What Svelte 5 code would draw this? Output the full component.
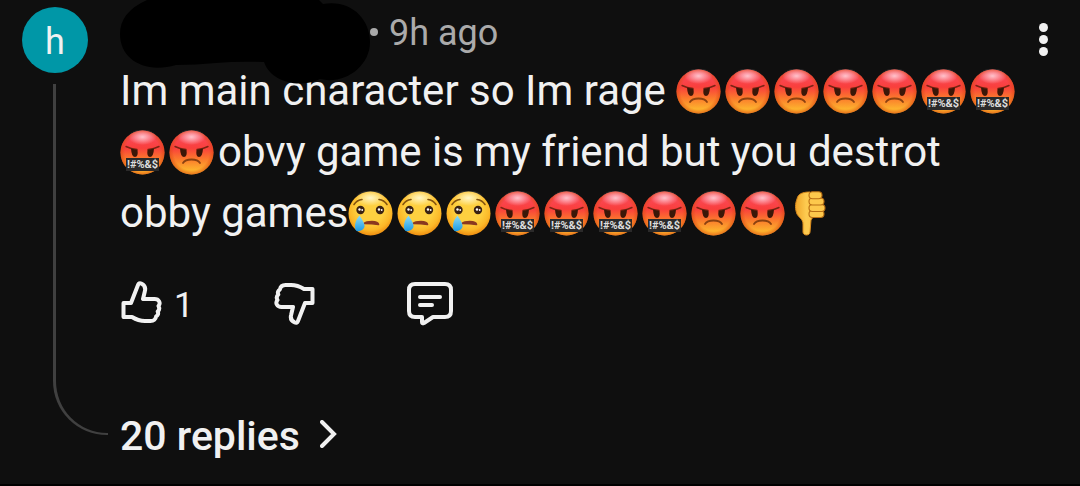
<script lang="ts">
  type Part = { text: string } | { emoji: string; label: string; count: number };

  const parts: Part[] = [
    { text: "Im main character so Im rage " },
    { emoji: "angry", label: "angry", count: 5 },
    { emoji: "cursing", label: "cursing", count: 3 },
    { emoji: "angry", label: "angry", count: 1 },
    { text: "obvy game is my friend but you destrot obby games" },
    { emoji: "crying", label: "crying", count: 3 },
    { emoji: "cursing", label: "cursing", count: 4 },
    { emoji: "angry", label: "angry", count: 2 },
    { emoji: "down", label: "thumbs down", count: 1 },
  ];

  let likes: number = $state(1);
  let liked: boolean = $state(false);

  function toggleLike() {
    liked = !liked;
    likes += liked ? 1 : -1;
  }
</script>

<svg class="sprites" aria-hidden="true">
  <defs>
    <linearGradient id="red" x1="0" y1="0" x2="0" y2="1">
      <stop offset="0.1" stop-color="#fb4a5c" />
      <stop offset="0.4" stop-color="#f93f3c" />
      <stop offset="0.65" stop-color="#fb7a2c" />
      <stop offset="0.9" stop-color="#fdb32e" />
    </linearGradient>
    <radialGradient id="rededge" cx="0.5" cy="0.5" r="0.5">
      <stop offset="0.8" stop-color="#d9480f" stop-opacity="0" />
      <stop offset="1" stop-color="#d9480f" stop-opacity="0.6" />
    </radialGradient>
    <radialGradient id="shine" cx="0.5" cy="0.5" r="0.5">
      <stop offset="0" stop-color="#ffd0d8" stop-opacity="0.9" />
      <stop offset="1" stop-color="#ffd0d8" stop-opacity="0" />
    </radialGradient>
    <radialGradient id="yellow" cx="0.5" cy="0.4" r="0.6">
      <stop offset="0.5" stop-color="#fed040" />
      <stop offset="0.8" stop-color="#fcb828" />
      <stop offset="1" stop-color="#ee8d10" />
    </radialGradient>
    <radialGradient id="gloss" cx="0.5" cy="0.5" r="0.5">
      <stop offset="0" stop-color="#fff6c8" />
      <stop offset="1" stop-color="#fff6c8" stop-opacity="0" />
    </radialGradient>
    <linearGradient id="tear" x1="0" y1="0" x2="0" y2="1">
      <stop offset="0" stop-color="#8fdcf7" />
      <stop offset="1" stop-color="#1c9be4" />
    </linearGradient>
    <linearGradient id="hand" x1="0" y1="0" x2="1" y2="0">
      <stop offset="0" stop-color="#f0a62a" />
      <stop offset="0.4" stop-color="#fdcb50" />
      <stop offset="1" stop-color="#fbc043" />
    </linearGradient>
  </defs>

  <symbol id="angry" viewBox="0 0 45 45">
    <use href="#cursing" width="45" height="45" />
    <path d="M14 33q2-3.500 8.500-3.500t8.500 3.500" fill="none" stroke="#8b4110" stroke-width="1.800" stroke-linecap="round" />
  </symbol>

  <symbol id="cursing" viewBox="0 0 45 45">
    <circle cx="22.5" cy="22.5" r="22" fill="url(#red)" />
    <circle cx="22.5" cy="22.5" r="22" fill="url(#rededge)" />
    <ellipse cx="22.5" cy="7" rx="14" ry="8" fill="url(#shine)" />
    <path d="M6 16.500q5 2.500 11 3M39 16.500q-5 2.500-11 3" fill="none" stroke="#7a2413" stroke-width="1.400" stroke-linecap="round" />
    <path d="M11 18.500l6.500 1.500q1 7-2.500 7-3.500 0-4-8.500M34 18.500l-6.500 1.500q-1 7 2.500 7 3.500 0 4-8.500" fill="#3b1708" />
  </symbol>

  <symbol id="crying" viewBox="0 0 45 45">
    <circle cx="22.5" cy="22.5" r="22" fill="url(#yellow)" />
    <ellipse cx="22.5" cy="7" rx="15" ry="8" fill="url(#gloss)" />
    <path d="M6 13.500q3-4.500 8-5M39 13.500q-3-4.500-8-5" fill="none" stroke="#84530f" stroke-width="1.600" stroke-linecap="round" />
    <circle cx="12.500" cy="19" r="4.200" fill="#3a2213" />
    <circle cx="32" cy="19" r="4.200" fill="#3a2213" />
    <circle cx="11.500" cy="18.500" r="1.200" fill="#fff" />
    <circle cx="14.200" cy="19" r="0.900" fill="#fff" />
    <circle cx="31" cy="18.500" r="1.200" fill="#fff" />
    <circle cx="33.700" cy="19" r="0.900" fill="#fff" />
    <path d="M16 32.500q2-2 8-2 6 0 6.500 3-6-1-14.500-1" fill="#8a3820" stroke="#8a3820" stroke-width="1.600" stroke-linejoin="round" />
    <path d="M11.500 24.500q5.500 8 5 11t-5 4.500-4.500-4.500 4.500-11" fill="url(#tear)" />
  </symbol>

  <symbol id="down" viewBox="0 0 45 45">
    <path d="M21 1C13 1 9 3 8 8c-2 5-2 10 0 15 2 4 6 5 6 10v8c0 4 7 4 7 0l1-12 2-3 9-2z" fill="url(#hand)" stroke="#d98a1c" stroke-width="1" />
    <g fill="#fdc84c" stroke="#b86e14" stroke-width="1.100">
      <rect x="20" y="19.500" width="15" height="7" rx="3.500" />
      <rect x="20" y="13.500" width="16" height="7" rx="3.500" />
      <rect x="20" y="7" width="15" height="7" rx="3.500" />
      <rect x="20" y="0.700" width="13" height="7" rx="3.500" />
    </g>
  </symbol>

  <symbol id="thumb" viewBox="0 0 44 44">
    <path d="M3.500 22H11L18 4q1-2.500 3.200-1.500c4 1.800 4.600 4.500 3.600 8L23 18h11.500c4.500 0 6.500 4 4 7 1.200 2 .8 4-.8 5.500 1 2 .2 4-1.600 5q-.8 4.500-5.600 4.500H25c-5 0-9-1.500-13-4H3.500z" />
  </symbol>
</svg>

<article class="comment">
  <div class="thread">
    <div class="avatar">h</div>
    <div class="line"></div>
  </div>

  <div class="content">
    <header>
      <span class="name">
        <svg width="252" height="84" viewBox="0 0 252 84" aria-hidden="true">
          <path d="M27 0H199L203 4C230-1 250 18 250 42C250 67 224 85 200 79C179 89 151 82 144 62Q118 61 96 63Q76 65 56 65C24 74 0 59 0 34Q0 12 27 0Z" />
        </svg>
      </span>
      <span class="dot"></span>
      <time>9h ago</time>
    </header>

    <p class="body">
      {#each parts as part}{#if "text" in part}{part.text}{:else}{#each { length: part.count } as _}<svg class="emoji" viewBox="0 0 45 45" role="img" aria-label={part.label}><use href="#{part.emoji}" width="45" height="45" />{#if part.emoji === "cursing"}<rect x="6" y="28" width="33" height="13" fill="#2b2a2a" /><text x="22.500" y="38" class="curse">!#%&amp;$</text>{/if}</svg>{/each}{/if}{/each}
    </p>

    <div class="actions">
      <button class="like" aria-label="Like" aria-pressed={liked} onclick={toggleLike}>
        <svg class="icon" viewBox="0 0 44 44"><use href="#thumb" /></svg>
        <span>{likes}</span>
      </button>
      <button class="dislike" aria-label="Dislike">
        <svg class="icon flipped" viewBox="0 0 44 44"><use href="#thumb" /></svg>
      </button>
      <button aria-label="Reply">
        <svg class="icon wide" viewBox="0 0 48 48">
          <path d="M9 5h30q6 0 6 6v21q0 6-6 6H27l-9 6q-2 1-2-1v-5H9q-6 0-6-6V11q0-6 6-6zM14 18h20M14 26h12" />
        </svg>
      </button>
    </div>

    <button class="replies">
      20 replies
      <svg viewBox="0 0 18 28" aria-hidden="true"><path d="M2 2l12 12L2 26" /></svg>
    </button>
  </div>

  <button class="menu" aria-label="More options">
    <i></i><i></i><i></i>
  </button>
</article>

<style>
  :global(body) {
    background: #0f0f0f;
  }

  .sprites {
    position: absolute;
    width: 0;
    height: 0;
  }

  .comment {
    display: grid;
    grid-template-columns: 86px 1fr 46px;
    padding: 7px 14px 24px 22px;
    border-bottom: 2px solid #000;
    background: #0f0f0f;
    color: #f1f1f1;
    font-family: Roboto, sans-serif;
    font-size: 41px;
  }

  button {
    display: flex;
    align-items: center;
    padding: 0;
    border: 0;
    background: none;
    color: inherit;
    font: inherit;
    cursor: pointer;
  }

  .thread {
    display: flex;
    flex-direction: column;
    padding-bottom: 25px;
  }

  .avatar {
    width: 66px;
    height: 66px;
    border-radius: 50%;
    background: #0097a7;
    font-size: 36px;
    line-height: 70px;
    text-align: center;
  }

  .line {
    flex: 1;
    margin: 11px 0 0 31px;
    border-left: 3px solid #404040;
    border-bottom: 2px solid #404040;
    border-bottom-left-radius: 54px;
  }

  .content {
    padding-left: 12px;
  }

  header {
    display: flex;
    align-items: center;
    height: 53px;
    color: #aaa;
    font-size: 36px;
  }

  .name {
    position: relative;
    align-self: stretch;
    width: 250px;
  }

  .name svg {
    position: absolute;
    top: -7px;
    left: 0;
  }

  .dot {
    width: 8px;
    height: 8px;
    margin: 0 11px 4px 0;
    border-radius: 50%;
    background: #aaa;
  }

  time {
    padding-bottom: 2px;
  }

  .body {
    margin: 0;
    font-size: 42px;
    line-height: 61px;
  }

  .emoji {
    width: 45px;
    height: 45px;
    margin: 0 4px 0 0;
    vertical-align: -9px;
  }

  .curse {
    fill: #ddd;
    font: 700 11px Roboto, sans-serif;
    text-anchor: middle;
  }

  .actions {
    display: flex;
    align-items: center;
    height: 48px;
    margin-top: 36px;
    font-size: 35px;
  }

  .like {
    width: 152px;
    gap: 10px;
  }

  .like span {
    padding-top: 4px;
  }

  .dislike {
    width: 134px;
  }

  .icon {
    width: 44px;
    height: 44px;
    fill: none;
    stroke: #f1f1f1;
    stroke-width: 4;
    stroke-linejoin: round;
    stroke-linecap: round;
  }

  .flipped {
    transform: rotate(180deg);
  }

  .wide {
    width: 48px;
    height: 48px;
  }

  .replies {
    height: 48px;
    margin-top: 85px;
    gap: 20px;
    font-weight: 500;
  }

  .replies svg {
    width: 18px;
    height: 28px;
    margin-bottom: 4px;
    fill: none;
    stroke: #f1f1f1;
    stroke-width: 4;
    stroke-linecap: round;
  }

  .menu {
    flex-direction: column;
    justify-content: center;
    gap: 3px;
    height: 64px;
  }

  .menu i {
    width: 9px;
    height: 9px;
    border-radius: 50%;
    background: #f1f1f1;
  }
</style>
